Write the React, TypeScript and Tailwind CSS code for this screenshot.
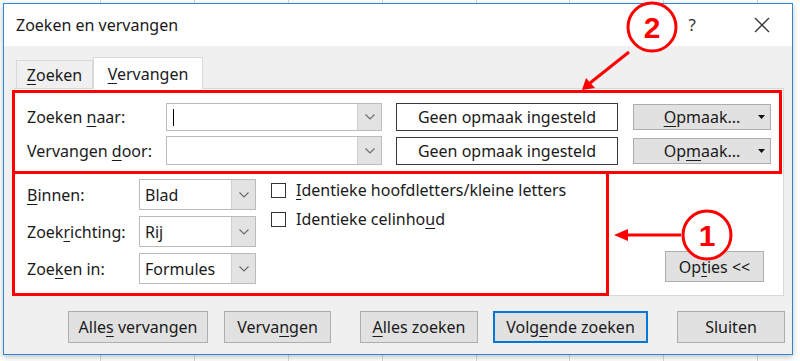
import React from "react";

const font = { fontFamily: '"Noto Sans", "Open Sans", Arial, sans-serif' };

function Chevron() {
  return (
    <svg width="10" height="6" viewBox="0 0 10 6" className="block">
      <path d="M0.5 0.5 L5 5 L9.5 0.5" fill="none" stroke="#6d6d6d" strokeWidth="1.2" />
    </svg>
  );
}

function Combo({ w, h, value, caret }: { w: string; h: string; value?: string; caret?: boolean }) {
  return (
    <div className={`flex ${w} ${h} border border-[#bcbcbc] bg-white`}>
      <div className="flex-1 flex items-center pl-[5px] text-[16px] text-[#1a1a1a]">
        {caret ? <span className="block w-[1px] h-[17px] bg-black ml-[1px]" /> : value}
      </div>
      <div className="w-[24px] flex items-center justify-center bg-[#e3e3e3] border-l border-[#cfcfcf]">
        <Chevron />
      </div>
    </div>
  );
}

function Btn({ w, children, focus }: { w: string; children: React.ReactNode; focus?: boolean }) {
  return (
    <div
      className={`${w} h-[32px] flex items-center justify-center text-[16px] text-[#1a1a1a] bg-[#e1e1e1] ${
        focus ? "border-2 border-[#0078d7]" : "border border-[#adadad]"
      }`}
    >
      {children}
    </div>
  );
}

function U({ children }: { children: React.ReactNode }) {
  return <span className="underline underline-offset-[3px] decoration-1">{children}</span>;
}

function Opmaak({ children }: { children: React.ReactNode }) {
  return (
    <div className="w-[138px] h-[26px] flex items-center bg-[#e1e1e1] border border-[#adadad] text-[16px] text-[#1a1a1a]">
      <div className="flex-1 text-center pl-[18px]">{children}</div>
      <svg width="7" height="4" viewBox="0 0 7 4" className="mr-[5px] ml-[6px]">
        <path d="M0 0 L7 0 L3.5 4 Z" fill="#111" />
      </svg>
    </div>
  );
}

export default function App() {
  const gridX = [100, 194, 288, 382, 476, 569, 663, 757];
  return (
    <div className="relative w-[800px] h-[361px] overflow-hidden bg-white" style={font}>
      {gridX.map((x) => (
        <div key={x} className="absolute top-0 bottom-0 w-px bg-[#d6d6d6]" style={{ left: x }} />
      ))}

      <div className="relative ml-[3px] pt-[3px] w-[790px]">
        <div className="w-[790px] h-[352px] flex flex-col border border-[#2b88d8] bg-[#f0f0f0] shadow-[0_2px_6px_rgba(0,0,0,0.25)]">
          {/* Title bar */}
          <div className="h-[42px] bg-white flex items-center pl-[12px] pr-[22px]">
            <div className="text-[16px] text-[#1a1a1a]">Zoeken en vervangen</div>
            <div className="flex-1" />
            <div className="text-[17px] text-[#333] mr-[58px]">?</div>
            <svg width="16" height="16" viewBox="0 0 16 16">
              <path d="M1 1 L15 15 M15 1 L1 15" stroke="#333" strokeWidth="1.3" />
            </svg>
          </div>

          {/* Body */}
          <div className="flex-1 flex flex-col">
            {/* Tabs */}
            <div className="flex items-end h-[42px] pl-[12px]">
              <div className="w-[77px] h-[28px] flex items-center justify-center border border-b-0 border-[#d9d9d9] bg-[#f0f0f0] text-[16px] text-[#1a1a1a]">
                <span>
                  <U>Z</U>oeken
                </span>
              </div>
              <div className="w-[110px] h-[32px] flex items-center justify-center border border-b-0 border-[#d9d9d9] bg-white text-[16px] text-[#1a1a1a] -mb-px relative z-10">
                <span>
                  <U>V</U>ervangen
                </span>
              </div>
            </div>

            {/* Panel */}
            <div className="relative ml-[10px] w-[770px] h-[208px] bg-white border border-[#d9d9d9] pt-[14px] pl-[12px] text-[16px] text-[#1a1a1a]">
              <div className="flex flex-col gap-[5px]">
                <div className="flex items-center h-[28px]">
                  <div className="w-[139px]">
                    Zoeken <U>n</U>aar:
                  </div>
                  <Combo w="w-[216px]" h="h-[28px]" caret />
                  <div className="ml-[14px] w-[222px] h-[28px] border-[1.5px] border-[#3a3a3a] flex items-center justify-center">
                    Geen opmaak ingesteld
                  </div>
                  <div className="ml-[15px]">
                    <Opmaak>
                      <U>O</U>pmaak...
                    </Opmaak>
                  </div>
                </div>
                <div className="flex items-center h-[29px]">
                  <div className="w-[139px]">
                    Vervangen <U>d</U>oor:
                  </div>
                  <Combo w="w-[216px]" h="h-[29px]" />
                  <div className="ml-[14px] w-[222px] h-[28px] border-[1.5px] border-[#3a3a3a] flex items-center justify-center">
                    Geen opmaak ingesteld
                  </div>
                  <div className="ml-[15px]">
                    <Opmaak>
                      Op<U>m</U>aak...
                    </Opmaak>
                  </div>
                </div>
              </div>

              <div className="flex mt-[14px]">
                <div className="flex flex-col gap-[6px]">
                  <div className="flex items-center h-[31px]">
                    <div className="w-[112px]">
                      <U>B</U>innen:
                    </div>
                    <Combo w="w-[117px]" h="h-[31px]" value="Blad" />
                  </div>
                  <div className="flex items-center h-[31px]">
                    <div className="w-[112px]">
                      Zoek<U>r</U>ichting:
                    </div>
                    <Combo w="w-[117px]" h="h-[31px]" value="Rij" />
                  </div>
                  <div className="flex items-center h-[31px]">
                    <div className="w-[112px]">
                      Zoe<U>k</U>en in:
                    </div>
                    <Combo w="w-[117px]" h="h-[31px]" value="Formules" />
                  </div>
                </div>
                <div className="ml-[15px] pt-[3px] flex flex-col gap-[13px]">
                  <div className="flex items-center h-[16px]">
                    <div className="w-[15px] h-[15px] border border-[#333] bg-white" />
                    <div className="ml-[10px]">
                      <U>I</U>dentieke hoofdletters/kleine letters
                    </div>
                  </div>
                  <div className="flex items-center h-[16px]">
                    <div className="w-[15px] h-[15px] border border-[#333] bg-white" />
                    <div className="ml-[10px]">
                      Identieke celinho<U>u</U>d
                    </div>
                  </div>
                </div>
                <div className="flex-1" />
                <div className="self-end mr-[19px] mb-[2px] w-[99px] h-[31px] flex items-center justify-center bg-[#e1e1e1] border border-[#adadad]">
                  <span>
                    Op<U>t</U>ies &lt;&lt;
                  </span>
                </div>
              </div>
            </div>

            {/* Bottom buttons */}
            <div className="flex mt-[15px] pl-[64px]">
              <Btn w="w-[140px]">
                <span>
                  Alle<U>s</U> vervangen
                </span>
              </Btn>
              <div className="ml-[16px]">
                <Btn w="w-[107px]">
                  <span>
                    Verva<U>n</U>gen
                  </span>
                </Btn>
              </div>
              <div className="ml-[29px]">
                <Btn w="w-[118px]">
                  <span>
                    <U>A</U>lles zoeken
                  </span>
                </Btn>
              </div>
              <div className="ml-[15px]">
                <Btn w="w-[155px]" focus>
                  <span>
                    Volg<U>e</U>nde zoeken
                  </span>
                </Btn>
              </div>
              <div className="ml-[29px]">
                <Btn w="w-[108px]">
                  <span>Sluiten</span>
                </Btn>
              </div>
            </div>
          </div>
        </div>
      </div>

      {/* Annotations overlay */}
      <svg className="absolute inset-0 pointer-events-none" width="800" height="361" viewBox="0 0 800 361">
        <rect x="13.5" y="91.5" width="767" height="81" fill="none" stroke="#ff0000" strokeWidth="3" />
        <rect x="13.5" y="172.5" width="594" height="122" fill="none" stroke="#ff0000" strokeWidth="3" />
        <circle cx="652" cy="27" r="24" fill="white" stroke="#ff0000" strokeWidth="3" />
        <text x="652" y="38" textAnchor="middle" fontSize="30" fontWeight="700" fill="#ff0000" fontFamily="Arial, sans-serif">2</text>
        <line x1="629" y1="52" x2="590" y2="83" stroke="#ff0000" strokeWidth="3" />
        <path d="M582 90 L586 78 L595 88 Z" fill="#ff0000" />
        <circle cx="707" cy="235" r="24" fill="white" stroke="#ff0000" strokeWidth="3" />
        <text x="707" y="246" textAnchor="middle" fontSize="30" fontWeight="700" fill="#ff0000" fontFamily="Arial, sans-serif">1</text>
        <line x1="681" y1="235" x2="625" y2="235" stroke="#ff0000" strokeWidth="3" />
        <path d="M614 235 L628 229 L628 241 Z" fill="#ff0000" />
      </svg>
    </div>
  );
}
